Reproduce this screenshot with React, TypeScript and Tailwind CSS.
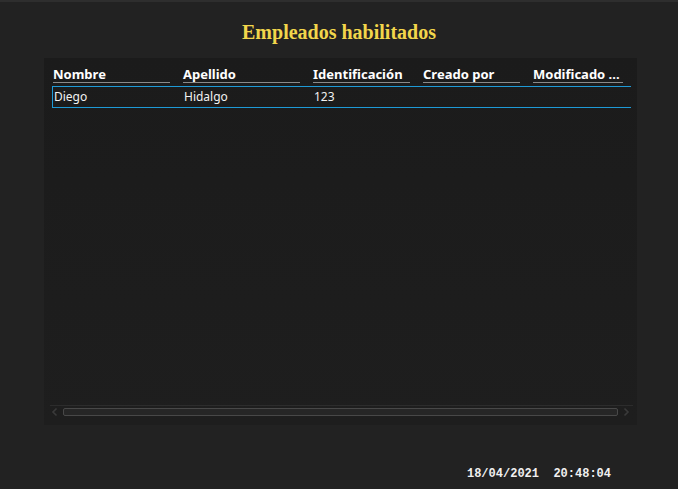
import React from 'react';

const columns = [
  { label: 'Nombre', width: 'w-[130px]' },
  { label: 'Apellido', width: 'w-[130px]' },
  { label: 'Identificación', width: 'w-[110px]' },
  { label: 'Creado por', width: 'w-[110px]' },
  { label: 'Modificado ...', width: 'w-[103px]' },
];

const rows = [{ nombre: 'Diego', apellido: 'Hidalgo', id: '123', creado: '', modificado: '' }];

export default function App() {
  return (
    <div className="w-[678px] h-[489px] bg-[#222222] border-t-2 border-[#2e2e2e] flex flex-col overflow-hidden">
      <h1 className="h-[56px] pt-[18px] text-center text-[20px] leading-[24px] font-bold text-[#f2d64b] font-['Liberation_Serif',serif]">
        Empleados habilitados
      </h1>

      <div className="mx-[44px] w-[593px] h-[367px] bg-gradient-to-b from-[#1b1b1b] to-[#1e1e1e] pl-[8px] pt-[8px] pr-[6px] pb-[8px] flex flex-col font-['Noto_Sans',sans-serif]">
        <div className="flex-1 overflow-hidden">
          <div className="flex pl-[1px] whitespace-nowrap">
            {columns.map((c) => (
              <div key={c.label} className={`${c.width} shrink-0 pr-[13px]`}>
                <div className="text-[13px] leading-[16px] font-bold text-white border-b border-[#8a8a8a]">
                  {c.label}
                </div>
              </div>
            ))}
          </div>
          {rows.map((r) => (
            <div
              key={r.id}
              className="mt-[3px] w-[640px] h-[22px] border border-r-0 border-[#1e9ad6] flex items-center text-[12px] text-[#f2f2f2] whitespace-nowrap"
            >
              <div className="w-[130px] shrink-0 pl-[1px]">{r.nombre}</div>
              <div className="w-[130px] shrink-0 pl-[1px]">{r.apellido}</div>
              <div className="w-[110px] shrink-0 pl-[1px]">{r.id}</div>
              <div className="w-[110px] shrink-0">{r.creado}</div>
              <div className="w-[110px] shrink-0">{r.modificado}</div>
            </div>
          ))}
        </div>

        <div className="h-[12px] border-t border-[#2c2c2c] flex items-center gap-[3px] pr-[2px] -mx-[2px]">
          <svg width="10" height="10" viewBox="0 0 10 10" className="shrink-0">
            <path d="M6.5 1.5 L3 5 L6.5 8.5" stroke="#3a3a3a" strokeWidth="1.6" fill="none" />
          </svg>
          <div className="flex-1 h-[8px] rounded-[2px] border border-[#484848] bg-[#262626]" />
          <svg width="10" height="10" viewBox="0 0 10 10" className="shrink-0">
            <path d="M3.5 1.5 L7 5 L3.5 8.5" stroke="#3a3a3a" strokeWidth="1.6" fill="none" />
          </svg>
        </div>
      </div>

      <div className="flex-1 flex items-start justify-end pr-[67px] pt-[42px]">
        <span className="text-[12px] leading-[14px] font-bold text-[#f0f0f0] font-['Liberation_Mono',monospace] whitespace-pre">
          18/04/2021  20:48:04
        </span>
      </div>
    </div>
  );
}
